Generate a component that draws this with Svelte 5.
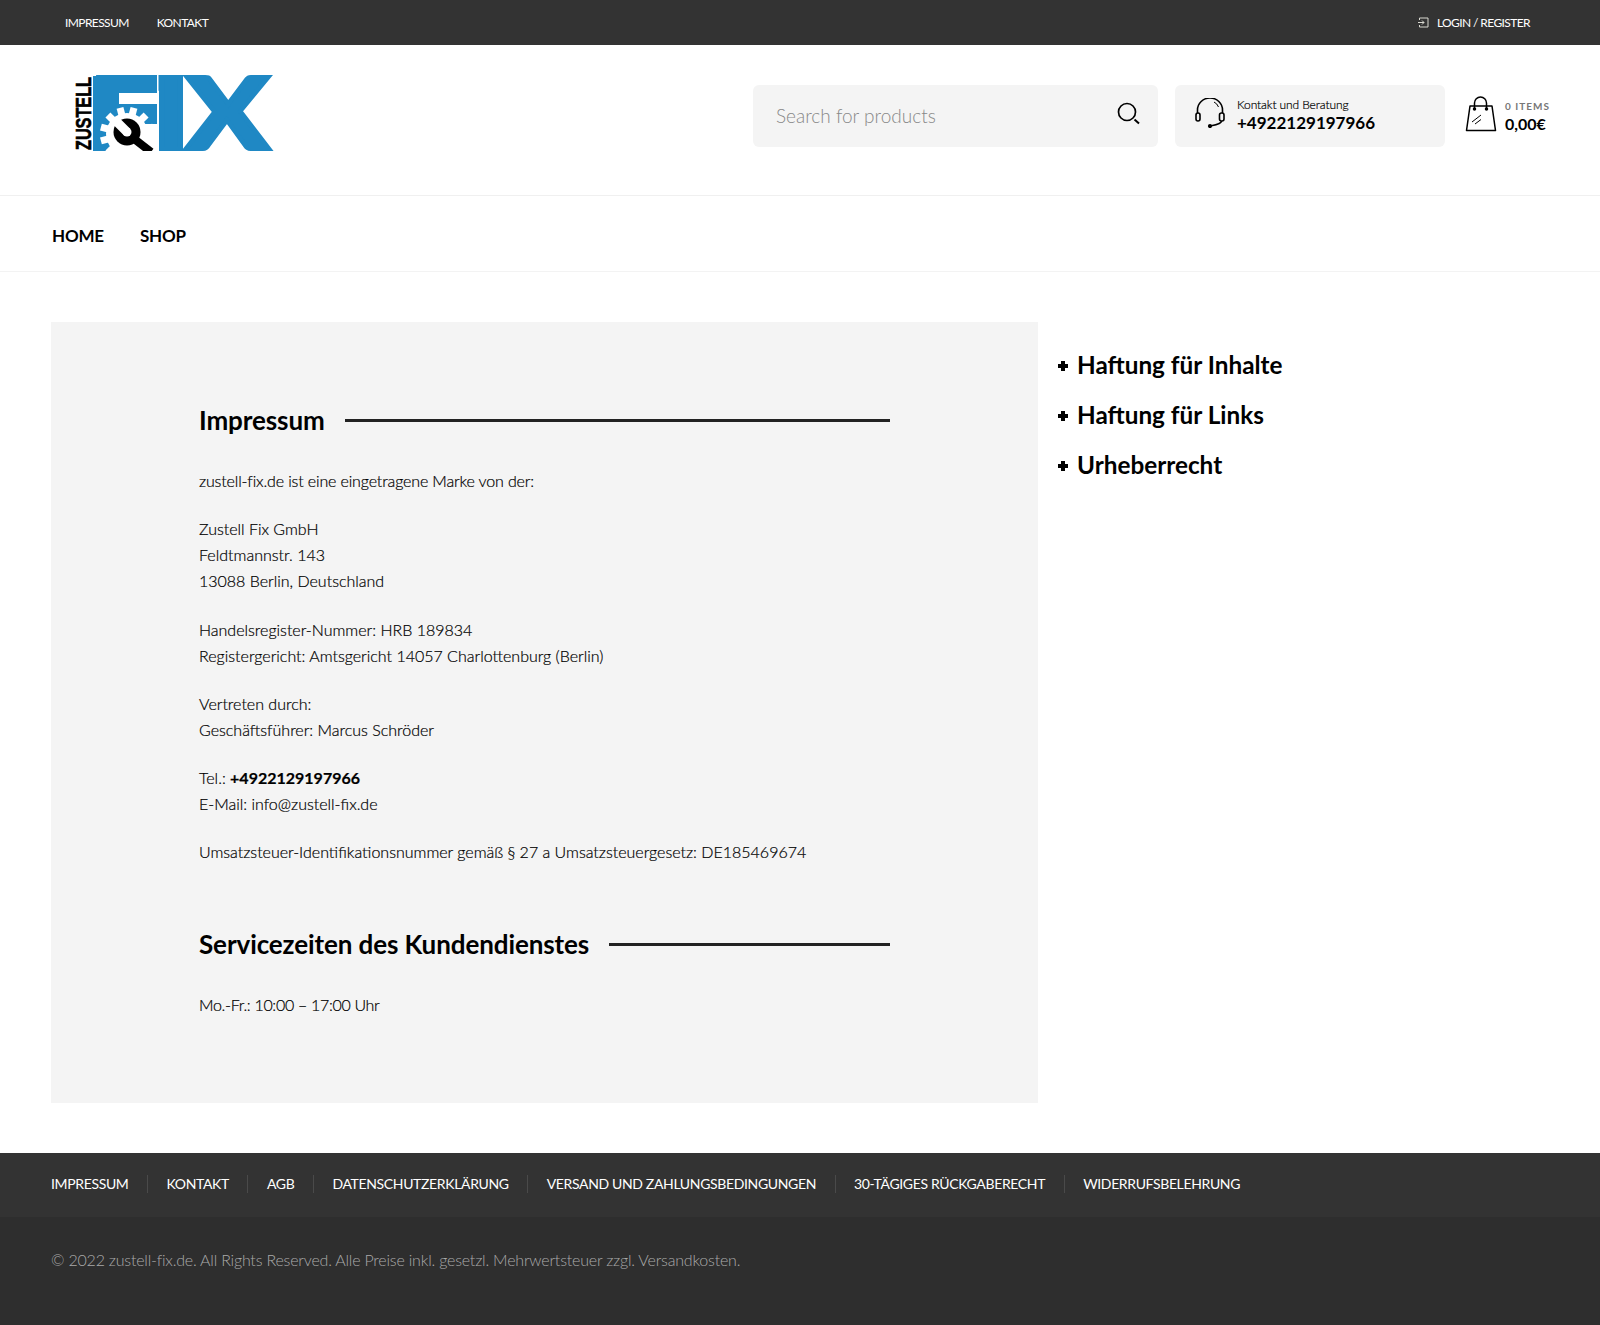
<script>
  const topLinks = ['IMPRESSUM', 'KONTAKT'];
  const navLinks = ['HOME', 'SHOP'];
  const sideLinks = ['Haftung für Inhalte', 'Haftung für Links', 'Urheberrecht'];
  const footerLinks = [
    'IMPRESSUM',
    'KONTAKT',
    'AGB',
    'DATENSCHUTZERKLÄRUNG',
    'VERSAND UND ZAHLUNGSBEDINGUNGEN',
    '30-TÄGIGES RÜCKGABERECHT',
    'WIDERRUFSBELEHRUNG'
  ];
  const gearTeeth = [0, 30, 60, 90, 120, 150, 180, 210, 240, 270, 300, 330];
</script>

<div class="topbar">
  <div class="toplinks">
    {#each topLinks as link}
      <a href="#top">{link}</a>
    {/each}
  </div>
  <a class="login" href="#top">
    <svg width="11" height="11" viewBox="0 0 11 11" fill="none" stroke="#d8d8d0" stroke-width="1">
      <path d="M1.500 3V1h8.500v9H1.500V8M0 5.500h6M4 3.500l2 2-2 2" />
    </svg>
    LOGIN / REGISTER
  </a>
</div>

<header class="header">
  <svg class="logo" width="204" height="77" viewBox="0 0 204 77">
    <text class="logo-small" transform="translate(18 76) rotate(-90)" textLength="73" lengthAdjust="spacingAndGlyphs">ZUSTELL</text>
    <text class="logo-fix" x="16" y="75" textLength="72" lengthAdjust="spacingAndGlyphs">F</text>
    <text class="logo-fix" x="79" y="75" textLength="38" lengthAdjust="spacingAndGlyphs">I</text>
    <text class="logo-fix" x="113" y="75" textLength="83" lengthAdjust="spacingAndGlyphs">X</text>
    <!-- F body: square it off so the gear sits in the lower corner -->
    <rect x="20" y="2" width="64" height="18" fill="#1f88c4" />
    <rect x="20" y="2" width="26" height="75" fill="#1f88c4" />
    <rect x="46" y="19" width="38" height="11" fill="#fff" />
    <rect x="46" y="30" width="38" height="20" fill="#1f88c4" />
    <rect x="46" y="50" width="38" height="27" fill="#fff" />
    <rect x="84" y="0" width="1.500" height="77" fill="#fff" />
    <g fill="#fff">
      <circle cx="54" cy="60" r="21" />
      {#each gearTeeth as a}
        <rect x="50.500" y="33" width="7" height="10" transform="rotate({a + 15} 54 60)" />
      {/each}
    </g>
    <circle cx="54" cy="58" r="13.500" fill="#000" />
    <path d="M60 64l18 14" stroke="#000" stroke-width="8" fill="none" />
    <path d="M54 58L44 48" stroke="#fff" stroke-width="9" fill="none" />
    <circle cx="54" cy="58" r="4.500" fill="#fff" />
    <rect x="20" y="77" width="70" height="8" fill="#fff" />
  </svg>

  <div class="search">
    <span class="placeholder">Search for products</span>
    <svg width="24" height="24" viewBox="0 0 24 24" fill="none" stroke="#000">
      <circle cx="10" cy="10" r="8.500" stroke-width="1.700" />
      <path d="M17.500 17.500l4.500 4" stroke-width="2" />
    </svg>
  </div>

  <div class="contact">
    <svg class="headset" width="30" height="30" viewBox="0 0 30 30" fill="none" stroke="#000" stroke-width="1.600">
      <path d="M2.500 15V12a12.500 12 0 0 1 25 0v3" />
      <path d="M19 4a9 9 0 0 1 4.500 5" stroke-width="1" />
      <rect x="1" y="15" width="4" height="8" rx="2" />
      <rect x="24.500" y="15" width="4.500" height="8" rx="2" />
      <path d="M26.500 23c0 3-6 4-11 5" />
      <circle cx="15" cy="28" r="1.300" fill="#000" />
    </svg>
    <div>
      <div class="contact-label">Kontakt und Beratung</div>
      <div class="contact-phone">+4922129197966</div>
    </div>
  </div>

  <div class="cart">
    <svg class="bag" width="32" height="36" viewBox="0 0 32 36" fill="none" stroke="#000" stroke-width="1.500">
      <path d="M5 10H27L30.500 34.500H1.500Z" stroke-linejoin="round" />
      <path d="M9.500 13V7a6 6 0 0 1 12 0v6" />
      <circle cx="9.500" cy="13" r="1" fill="#000" />
      <circle cx="21.500" cy="13" r="1" fill="#000" />
      <path d="M7 26l9-7M10 28l6-4.500" stroke-width="1" />
    </svg>
    <div>
      <div class="cart-count">0 ITEMS</div>
      <div class="cart-total">0,00€</div>
    </div>
  </div>
</header>

<nav class="nav">
  {#each navLinks as link}
    <a href="#top">{link}</a>
  {/each}
</nav>

<main class="main">
  <section class="panel">
    <h2><span>Impressum</span></h2>
    <p class="tight">zustell-fix.de ist eine eingetragene Marke von der:</p>
    <p>Zustell Fix GmbH<br />Feldtmannstr. 143<br />13088 Berlin, Deutschland</p>
    <p>Handelsregister-Nummer: HRB 189834<br />Registergericht: Amtsgericht 14057 Charlottenburg (Berlin)</p>
    <p>Vertreten durch:<br />Geschäftsführer: Marcus Schröder</p>
    <p>Tel.: <strong>+4922129197966</strong><br />E-Mail: info@zustell-fix.de</p>
    <p>Umsatzsteuer-Identifikationsnummer gemäß § 27 a Umsatzsteuergesetz: DE185469674</p>
    <h2 class="second"><span>Servicezeiten des Kundendienstes</span></h2>
    <p class="tighter">Mo.-Fr.: 10:00 – 17:00 Uhr</p>
  </section>

  <aside class="side">
    {#each sideLinks as link}
      <div class="side-item">
        <svg width="10" height="10" viewBox="0 0 10 10"><path d="M3 0h4v3h3v4H7v3H3V7H0V3h3z" /></svg>
        {link}
      </div>
    {/each}
  </aside>
</main>

<footer class="footer">
  <div class="footer-links">
    {#each footerLinks as link}
      <a href="#top">{link}</a>
    {/each}
  </div>
  <div class="copyright">© 2022 zustell-fix.de. All Rights Reserved. Alle Preise inkl. gesetzl. Mehrwertsteuer zzgl. Versandkosten.</div>
</footer>

<style>
  :global(body) {
    font-family: Lato, "Liberation Sans", sans-serif;
    font-weight: 300;
    font-size: 16px;
    color: #000;
    background: #fff;
  }
  a {
    color: inherit;
    text-decoration: none;
  }
  .topbar {
    height: 45px;
    background: #333;
    color: #fff;
    display: flex;
    justify-content: space-between;
    align-items: center;
    padding: 0 70px 0 65px;
    font-size: 12px;
    font-weight: 400;
    letter-spacing: -0.6px;
  }
  .toplinks {
    display: flex;
    gap: 28px;
  }
  .login {
    display: flex;
    align-items: center;
    gap: 8px;
  }
  .header {
    height: 150px;
    display: flex;
    align-items: center;
    border-bottom: 1px solid #f0f0f0;
    padding-left: 73px;
  }
  .logo {
    overflow: visible;
    margin-bottom: 16px;
    margin-right: 476px;
  }
  .logo-small {
    font-family: "Liberation Sans", sans-serif;
    font-weight: 700;
    font-size: 22px;
    stroke: #000;
    stroke-width: 0.6px;
  }
  .logo-fix {
    font-family: Lato, sans-serif;
    font-weight: 900;
    font-size: 99px;
    fill: #1f88c4;
    stroke: #1f88c4;
    stroke-width: 4px;
  }
  .search,
  .contact {
    height: 62px;
    background: #f4f4f4;
    border-radius: 6px;
    display: flex;
    align-items: center;
    box-sizing: border-box;
    margin-bottom: 9px;
  }
  .search {
    width: 405px;
    padding: 0 17px 4px 23px;
    justify-content: space-between;
  }
  .placeholder {
    font-size: 19px;
    color: #888;
    margin-top: 4px;
  }
  .contact {
    width: 270px;
    margin-left: 17px;
    padding-left: 20px;
    gap: 12px;
  }
  .headset {
    margin-bottom: 5px;
  }
  .contact-label {
    font-size: 12px;
    font-weight: 300;
    letter-spacing: -0.1px;
    line-height: 14px;
    -webkit-text-stroke: 0.2px #000;
  }
  .contact-phone {
    font-size: 17px;
    font-weight: 700;
    line-height: 22px;
    color: #000;
  }
  .cart {
    display: flex;
    align-items: center;
    gap: 8px;
    margin-left: 20px;
    margin-bottom: 9px;
  }
  .bag {
    margin-bottom: 4px;
  }
  .cart-count {
    font-size: 10px;
    font-weight: 700;
    letter-spacing: 1px;
    color: #777;
    line-height: 16px;
  }
  .cart-total {
    font-size: 16px;
    font-weight: 700;
    color: #000;
    line-height: 20px;
  }
  .nav {
    height: 76px;
    display: flex;
    align-items: center;
    gap: 36px;
    padding: 3px 0 0 52px;
    box-sizing: border-box;
    border-bottom: 1px solid #f3f3f3;
    font-size: 17px;
    font-weight: 700;
    letter-spacing: -0.2px;
    color: #000;
  }
  .main {
    display: flex;
    padding: 50px 0 50px 51px;
    gap: 20px;
  }
  .panel {
    width: 987px;
    height: 781px;
    box-sizing: border-box;
    background: #f4f4f4;
    padding: 80px 148px 0;
  }
  h2 {
    margin: 0 0 30px;
    font-size: 26px;
    font-weight: 700;
    letter-spacing: -0.1px;
    color: #000;
    line-height: 36px;
    display: flex;
    align-items: center;
    gap: 20px;
  }
  h2::after {
    content: "";
    flex: 1;
    height: 3px;
    background: #222;
  }
  h2.second {
    margin-top: 61px;
  }
  p {
    margin: 0 0 22.300px;
    line-height: 26px;
    -webkit-text-stroke: 0.2px #000;
  }
  p.tight {
    letter-spacing: -0.14px;
  }
  p.tighter {
    letter-spacing: -0.3px;
  }
  strong {
    font-weight: 700;
    color: #000;
  }
  .side {
    padding-top: 17px;
  }
  .side-item {
    display: flex;
    align-items: center;
    gap: 9px;
    height: 50px;
    font-size: 24.300px;
    font-weight: 700;
    color: #000;
  }
  .side-item svg {
    margin-top: 3px;
  }
  .footer {
    background: #2e2e2e;
    height: 172px;
  }
  .footer-links {
    height: 64px;
    background: #333;
    display: flex;
    align-items: center;
    padding: 0 0 2px 51px;
    box-sizing: border-box;
    color: #fff;
    font-size: 14px;
    font-weight: 400;
    letter-spacing: -0.35px;
  }
  .footer-links a {
    padding: 0 18.500px;
    border-left: 1px solid #4a4a4a;
    line-height: 18px;
  }
  .footer-links a:first-child {
    padding-left: 0;
    border-left: none;
  }
  .copyright {
    padding: 31px 0 0 51px;
    color: #aaa;
    line-height: 24px;
    letter-spacing: -0.2px;
  }
</style>
